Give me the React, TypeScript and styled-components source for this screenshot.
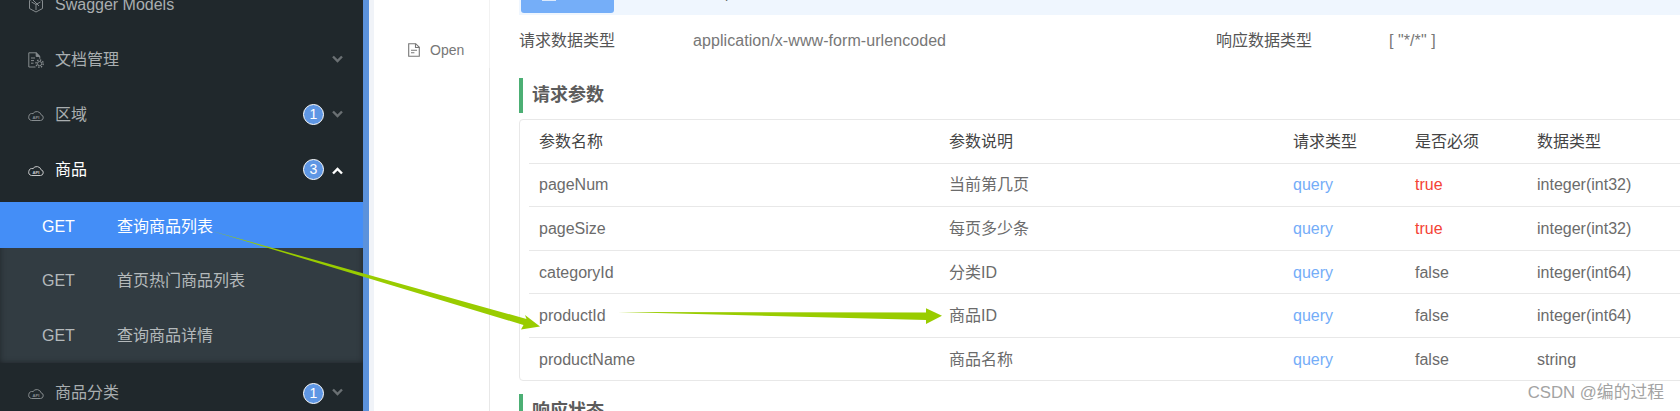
import React from "react";
import styled, { createGlobalStyle } from "styled-components";

const Global = createGlobalStyle`
  html, body { margin: 0; padding: 0; background: #fff; }
  body { font-family: "Liberation Sans", "Noto Sans CJK SC", sans-serif; }
`;

const Page = styled.div`
  position: relative;
  display: flex;
  width: 1680px;
  height: 411px;
  overflow: hidden;
  background: #fff;
`;

const Sidebar = styled.aside`
  flex: 0 0 363px;
  height: 411px;
  background: #20282c;
  overflow: hidden;
`;

const SideInner = styled.div`
  margin-top: -24px;
`;

const MenuRow = styled.div<{ $open?: boolean; $tall?: boolean }>`
  display: flex;
  align-items: center;
  box-sizing: border-box;
  height: ${(p) => (p.$tall ? 58 : 55)}px;
  padding: 2px 20px 0 28px;
  font-size: 16px;
  line-height: 20px;
  color: ${(p) => (p.$open ? "#ffffff" : "#a9aeb0")};
`;

const MenuIcon = styled.svg`
  flex: 0 0 16px;
  width: 16px;
  height: 16px;
  margin-right: 11px;
  fill: none;
  stroke: currentColor;
  opacity: 0.75;
`;

const MenuLabel = styled.span`
  flex: 1;
`;

const Badge = styled.span`
  box-sizing: border-box;
  width: 21px;
  height: 21px;
  border-radius: 50%;
  border: 1px solid #fff;
  background: #5f97e4;
  color: #fff;
  font-size: 14px;
  line-height: 19px;
  text-align: center;
  margin-right: 8px;
`;

const Chevron = styled.svg<{ $open?: boolean }>`
  width: 11px;
  height: 8px;
  margin-top: ${(p) => (p.$open ? 2 : -2)}px;
  fill: none;
  stroke: ${(p) => (p.$open ? "#ffffff" : "#6a7073")};
  stroke-width: 2.4;
`;

const SubList = styled.div`
  margin-top: 6px;
  background: #323c42;
  box-shadow: inset 0 -3px 6px -3px rgba(0, 0, 0, 0.3), inset -4px 0 6px -4px rgba(0, 0, 0, 0.25),
    inset 4px 0 6px -4px rgba(0, 0, 0, 0.25);
  height: 161px;
`;

const SubRest = styled.div`
  padding-top: 4px;
`;

const SubRow = styled.div<{ $active?: boolean }>`
  display: flex;
  align-items: center;
  box-sizing: border-box;
  height: ${(p) => (p.$active ? 46 : 55)}px;
  padding: 3px 0 0 42px;
  font-size: 16px;
  line-height: 20px;
  color: ${(p) => (p.$active ? "#ffffff" : "#b4b9bb")};
  background: ${(p) => (p.$active ? "#448ef7" : "transparent")};
`;

const SubMethod = styled.span`
  flex: 0 0 75px;
`;

const Strip = styled.div`
  flex: 0 0 6px;
  background: #5b92dc;
`;

const Gutter = styled.div`
  flex: 0 0 5px;
  background: #f0f3f8;
`;

const TabColumn = styled.nav`
  flex: 0 0 116px;
  box-sizing: border-box;
  height: 411px;
  border-right: 1px solid #e8e8e8;
`;

const TabItem = styled.div`
  display: flex;
  align-items: center;
  box-sizing: border-box;
  height: 68px;
  padding: 31px 0 0 34px;
  font-size: 14px;
  color: #777;
  border-right: 1px solid #f2f2f2;
  margin-right: -1px;
`;

const TabIcon = styled.svg`
  width: 12px;
  height: 14px;
  margin-right: 10px;
  fill: none;
  stroke: #777;
`;

const Content = styled.main`
  flex: 1;
  min-width: 0;
  padding-left: 29px;
`;

const TopBar = styled.div`
  display: flex;
  height: 15px;
  background: #eff6fe;
  overflow: hidden;
`;

const TopButton = styled.div`
  box-sizing: border-box;
  width: 93px;
  height: 13px;
  margin-left: 2px;
  padding-left: 21px;
  background: #75aef8;
  border-radius: 0 0 3px 3px;
`;

const TopButtonIcon = styled.div`
  width: 14px;
  height: 1px;
  background: #dbe9fc;
`;

const CutText = styled.span`
  margin: -15px 0 0 111px;
  font-size: 14px;
  line-height: 16px;
  height: 17px;
  color: #666;
`;

const MetaRow = styled.div`
  display: flex;
  align-items: center;
  box-sizing: border-box;
  height: 50px;
  padding-top: 2px;
  font-size: 16px;
  line-height: 20px;
  color: #666;
`;

const MetaLabel = styled.span<{ $w: number }>`
  flex: 0 0 ${(p) => p.$w}px;
  color: #555;
`;

const MetaValue = styled.span<{ $w?: number }>`
  flex: 0 0 ${(p) => p.$w ?? 100}px;
  color: #777;
  letter-spacing: 0.07px;
`;

const SectionTitle = styled.h3`
  margin: 13px 0 6px;
  box-sizing: border-box;
  height: 35px;
  line-height: 35px;
  padding-left: 9px;
  border-left: 4px solid #4caf74;
  font-size: 18px;
  font-weight: 700;
  color: #5c5c5c;
`;

const Table = styled.div`
  box-sizing: border-box;
  height: 262px;
  margin-right: -20px;
  padding: 0 0 0 9px;
  border: 1px solid #e8e8e8;
  border-radius: 4px;
`;

const TableRow = styled.div<{ $last?: boolean; $head?: boolean }>`
  display: grid;
  grid-template-columns: 410px 344px 122px 122px 1fr;
  align-items: center;
  box-sizing: border-box;
  height: 43.6px;
  padding: ${(p) => (p.$head ? 2 : 1)}px 0 0 10px;
  font-size: 16px;
  line-height: 20px;
  color: #6b6b6b;
  border-bottom: ${(p) => (p.$last ? "none" : "1px solid #e8e8e8")};
`;

const HeadCell = styled.span`
  color: #444;
`;

const QueryCell = styled.span`
  color: #74adf8;
`;

const RequiredCell = styled.span<{ $req: boolean }>`
  color: ${(p) => (p.$req ? "#f44336" : "#6b6b6b")};
`;

const Watermark = styled.div`
  position: absolute;
  right: 16px;
  top: 383px;
  font-size: 16.8px;
  line-height: 20px;
  color: #a3a3a3;
`;

const Arrows = styled.svg`
  position: absolute;
  left: 0;
  top: 0;
  width: 1680px;
  height: 411px;
  pointer-events: none;
`;

const CloudIcon = () => (
  <MenuIcon viewBox="0 0 16 16" strokeWidth="1">
    <path d="M3.5 13.5h9a2.9 2.9 0 0 0 .6-5.7A4.5 4.5 0 0 0 5 6.6a3.45 3.45 0 0 0-1.5 6.9z" />
    <text x="8" y="11.6" fontSize="4.2" fontWeight="700" textAnchor="middle" fill="currentColor" stroke="none">
      API
    </text>
  </MenuIcon>
);

const ModelsIcon = () => (
  <MenuIcon viewBox="0 0 16 16" strokeWidth="1">
    <path d="M8 .5l6.5 3v8L8 15l-6.5-3.5v-8z" />
    <path d="M3.5 5L8 7.5 12.5 5M8 7.5V13M5 3l6 6" />
  </MenuIcon>
);

const DocGearIcon = () => (
  <MenuIcon viewBox="0 0 16 16" strokeWidth="1">
    <path d="M7.5 15H.8V.8h7.4l3.6 3.6v2.4" />
    <path d="M8.2.8v3.6h3.6z" fill="currentColor" />
    <path d="M3 6h4M3 8.6h3M3 11.2h2.5" />
    <circle cx="11.6" cy="11.6" r="2.1" />
    <circle cx="11.6" cy="11.6" r="3.6" strokeDasharray="1.4 1.4" strokeWidth="1.4" />
  </MenuIcon>
);

const Down = () => (
  <Chevron viewBox="0 0 11 8">
    <polyline points="1,1.5 5.5,6 10,1.5" />
  </Chevron>
);

const Up = () => (
  <Chevron $open viewBox="0 0 11 8">
    <polyline points="1,6.5 5.5,2 10,6.5" />
  </Chevron>
);

const rows = [
  ["pageNum", "当前第几页", "true", "integer(int32)"],
  ["pageSize", "每页多少条", "true", "integer(int32)"],
  ["categoryId", "分类ID", "false", "integer(int64)"],
  ["productId", "商品ID", "false", "integer(int64)"],
  ["productName", "商品名称", "false", "string"],
];

export default function App() {
  return (
    <Page>
      <Global />
      <Sidebar>
        <SideInner>
          <MenuRow>
            <ModelsIcon />
            <MenuLabel>Swagger Models</MenuLabel>
          </MenuRow>
          <MenuRow>
            <DocGearIcon />
            <MenuLabel>文档管理</MenuLabel>
            <Down />
          </MenuRow>
          <MenuRow>
            <CloudIcon />
            <MenuLabel>区域</MenuLabel>
            <Badge>1</Badge>
            <Down />
          </MenuRow>
          <MenuRow $open>
            <CloudIcon />
            <MenuLabel>商品</MenuLabel>
            <Badge>3</Badge>
            <Up />
          </MenuRow>
          <SubList>
            <SubRow $active>
              <SubMethod>GET</SubMethod>
              <span>查询商品列表</span>
            </SubRow>
            <SubRest>
              <SubRow>
                <SubMethod>GET</SubMethod>
                <span>首页热门商品列表</span>
              </SubRow>
              <SubRow>
                <SubMethod>GET</SubMethod>
                <span>查询商品详情</span>
              </SubRow>
            </SubRest>
          </SubList>
          <MenuRow $tall>
            <CloudIcon />
            <MenuLabel>商品分类</MenuLabel>
            <Badge>1</Badge>
            <Down />
          </MenuRow>
        </SideInner>
      </Sidebar>
      <Strip />
      <Gutter />
      <TabColumn>
        <TabItem>
          <TabIcon viewBox="0 0 12 14" strokeWidth="1.1">
            <path d="M.7.7h7l3.6 3.6v9H.7z" />
            <path d="M7.5.7v3.8h3.8M3 7.2h6M3 9.8h3.4" />
          </TabIcon>
          Open
        </TabItem>
      </TabColumn>
      <Content>
        <TopBar>
          <TopButton>
            <TopButtonIcon />
          </TopButton>
          <CutText>p</CutText>
        </TopBar>
        <MetaRow>
          <MetaLabel $w={174}>请求数据类型</MetaLabel>
          <MetaValue $w={523}>application/x-www-form-urlencoded</MetaValue>
          <MetaLabel $w={173}>响应数据类型</MetaLabel>
          <MetaValue>[ "*/*" ]</MetaValue>
        </MetaRow>
        <SectionTitle>请求参数</SectionTitle>
        <Table>
          <TableRow $head>
            <HeadCell>参数名称</HeadCell>
            <HeadCell>参数说明</HeadCell>
            <HeadCell>请求类型</HeadCell>
            <HeadCell>是否必须</HeadCell>
            <HeadCell>数据类型</HeadCell>
          </TableRow>
          {rows.map((r, i) => (
            <TableRow key={r[0]} $last={i === rows.length - 1}>
              <span>{r[0]}</span>
              <span>{r[1]}</span>
              <QueryCell>query</QueryCell>
              <RequiredCell $req={r[2] === "true"}>{r[2]}</RequiredCell>
              <span>{r[3]}</span>
            </TableRow>
          ))}
        </Table>
        <SectionTitle>响应状态</SectionTitle>
      </Content>
      <Arrows viewBox="0 0 1680 411">
        <polygon fill="#99cc00" points="210,230.5 526.5,319 525,315 540,326.5 521,329.5 523.5,325" />
        <polygon fill="#99cc00" points="618,312 926,312.5 926,308.3 942,315.7 926,324 926,320" />
      </Arrows>
      <Watermark>CSDN @编的过程</Watermark>
    </Page>
  );
}
